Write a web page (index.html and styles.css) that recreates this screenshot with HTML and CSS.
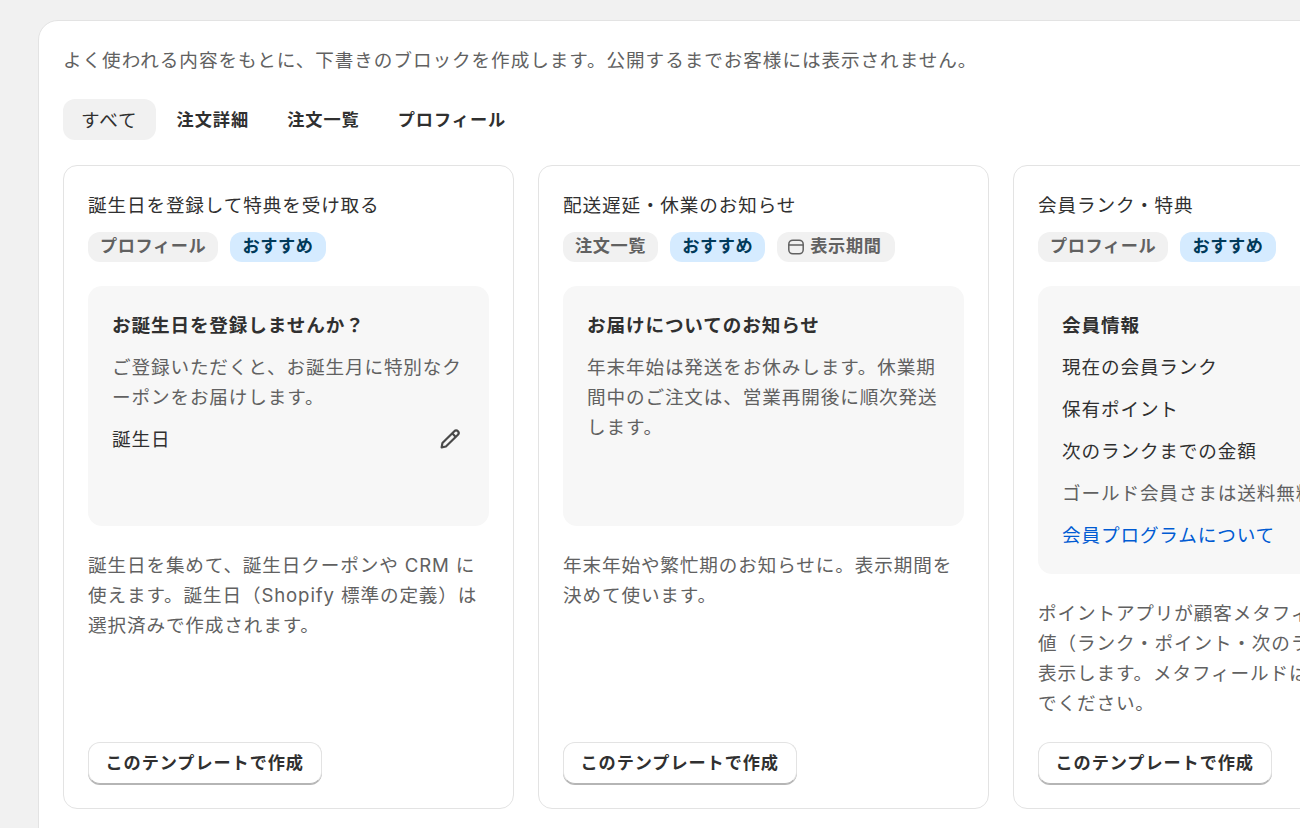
FILE: index.html
```html
<!DOCTYPE html>
<html lang="ja">
<head>
    <meta charset="UTF-8">
    <meta name="viewport" content="width=device-width, initial-scale=1.0">
    <title>テンプレート</title>
    <link rel="stylesheet" href="styles.css">
</head>
<body>
    <div class="panel">
        <p class="intro">よく使われる内容をもとに、下書きのブロックを作成します。公開するまでお客様には表示されません。</p>

        <div class="tabs">
            <button class="tab tab-active">すべて</button>
            <button class="tab">注文詳細</button>
            <button class="tab">注文一覧</button>
            <button class="tab">プロフィール</button>
        </div>

        <div class="cards">
            <div class="card">
                <div class="card-title">誕生日を登録して特典を受け取る</div>
                <div class="tags">
                    <span class="tag">プロフィール</span>
                    <span class="tag tag-blue">おすすめ</span>
                </div>
                <div class="preview">
                    <div class="preview-title">お誕生日を登録しませんか？</div>
                    <p class="preview-note">ご登録いただくと、お誕生月に特別なクーポンをお届けします。</p>
                    <div class="preview-field">
                        <span>誕生日</span>
                        <svg class="pencil" viewBox="0 0 20 20" width="24" height="24" fill="none" stroke="#4a4a4a" stroke-width="1.8" stroke-linejoin="round">
                            <path d="M3 17l.7-3.6L13.6 3.5a2.1 2.1 0 0 1 3 0c.8.8.8 2.1 0 2.9L6.6 16.3z"/>
                            <path d="M11.8 5.3l3 3"/>
                        </svg>
                    </div>
                </div>
                <p class="card-desc">誕生日を集めて、誕生日クーポンや CRM に使えます。誕生日（Shopify 標準の定義）は選択済みで作成されます。</p>
                <button class="create-btn">このテンプレートで作成</button>
            </div>

            <div class="card">
                <div class="card-title">配送遅延・休業のお知らせ</div>
                <div class="tags">
                    <span class="tag">注文一覧</span>
                    <span class="tag tag-blue">おすすめ</span>
                    <span class="tag tag-icon">
                        <svg viewBox="0 0 18 18" width="18" height="18" fill="none" stroke="#616161" stroke-width="1.5">
                            <rect x="1.8" y="2.2" width="14.4" height="13.6" rx="4"/>
                            <path d="M1.8 7h14.4"/>
                        </svg>
                        表示期間
                    </span>
                </div>
                <div class="preview">
                    <div class="preview-title">お届けについてのお知らせ</div>
                    <p class="preview-note">年末年始は発送をお休みします。休業期間中のご注文は、営業再開後に順次発送します。</p>
                </div>
                <p class="card-desc">年末年始や繁忙期のお知らせに。表示期間を決めて使います。</p>
                <button class="create-btn">このテンプレートで作成</button>
            </div>

            <div class="card">
                <div class="card-title">会員ランク・特典</div>
                <div class="tags">
                    <span class="tag">プロフィール</span>
                    <span class="tag tag-blue">おすすめ</span>
                </div>
                <div class="preview">
                    <div class="preview-title">会員情報</div>
                    <div class="preview-row">現在の会員ランク</div>
                    <div class="preview-row">保有ポイント</div>
                    <div class="preview-row">次のランクまでの金額</div>
                    <p class="preview-note">ゴールド会員さまは送料無料です。</p>
                    <a class="preview-link" href="#">会員プログラムについて</a>
                </div>
                <p class="card-desc">ポイントアプリが顧客メタフィールドに保存<br>値（ランク・ポイント・次のランクなど）を<br>表示します。メタフィールドは編集しない<br>でください。</p>
                <button class="create-btn">このテンプレートで作成</button>
            </div>
        </div>
    </div>
</body>
</html>
```

FILE: styles.css
```css
* {
    box-sizing: border-box;
}

body {
    margin: 0;
    height: 828px;
    padding: 20px 0 0 38px;
    overflow: hidden;
    background-color: #f1f1f1;
    color: #303030;
    font-family: 'Inter', 'Noto Sans CJK JP', sans-serif;
    font-size: 18.6px;
    line-height: 30px;
    letter-spacing: 0.88px;
}

p {
    margin: 0;
}

.panel {
    width: 1500px;
    height: 900px;
    padding: 24px;
    background-color: #fff;
    border: 1px solid #e3e3e3;
    border-radius: 20px;
}

.intro {
    color: #616161;
    letter-spacing: 0.95px;
}

.tabs {
    display: flex;
    gap: 3px;
    margin-top: 24px;
    margin-bottom: 25px;
}

.tab {
    height: 41px;
    padding: 0 17px 2px 18px;
    background: none;
    border: none;
    border-radius: 12px;
    color: #303030;
    font-family: inherit;
    font-size: 17.2px;
    font-weight: 700;
    letter-spacing: 0.95px;
}

.tab-active {
    padding-right: 18px;
    background-color: #f1f1f1;
    font-size: 18.6px;
    font-weight: 400;
}

.cards {
    display: flex;
    gap: 24px;
}

.card {
    display: flex;
    flex-direction: column;
    flex: none;
    width: 451px;
    padding: 24px;
    background-color: #fff;
    border: 1px solid #e3e3e3;
    border-radius: 14px;
}

.tags {
    display: flex;
    gap: 12px;
    margin-top: 12px;
}

.tag {
    display: flex;
    align-items: center;
    height: 30px;
    padding: 0 12px 2px;
    background-color: #f1f1f1;
    border-radius: 12px;
    color: #616161;
    font-size: 17.2px;
    font-weight: 700;
    letter-spacing: 0.6px;
}

.tag-blue {
    background-color: #d5ebff;
    color: #003a5a;
}

.tag-icon {
    gap: 5px;
    padding-left: 10px;
    padding-right: 14px;
}

.tag-icon svg {
    margin-top: 2px;
}

.preview {
    display: flex;
    flex-direction: column;
    gap: 12px;
    min-height: 240px;
    margin-top: 24px;
    padding: 24px;
    background-color: #f7f7f7;
    border-radius: 14px;
}

.preview-title {
    font-weight: 700;
}

.preview-note {
    color: #616161;
}

.preview-field {
    display: flex;
    justify-content: space-between;
    align-items: center;
    height: 30px;
}

.pencil {
    margin-right: 3px;
}

.preview-link {
    color: #005bd3;
    text-decoration: none;
}

.card-desc {
    flex: 1;
    margin-top: 24px;
    margin-bottom: 24px;
    color: #616161;
}

.create-btn {
    align-self: flex-start;
    height: 42px;
    padding: 0 17.5px 4px 16.5px;
    background-color: #fff;
    border: 1px solid #e3e3e3;
    border-bottom-color: #b5b5b5;
    border-radius: 12px;
    box-shadow: 0 1px 0 #b5b5b5;
    color: #303030;
    font-family: inherit;
    font-size: 17.2px;
    font-weight: 700;
    letter-spacing: 0.9px;
}
```
